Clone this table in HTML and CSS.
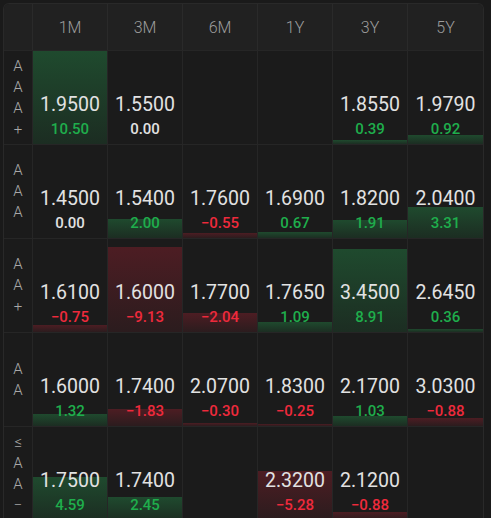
FILE: index.html
```html
<!DOCTYPE html>
<html>
<head>
<meta charset="utf-8">
<link rel="stylesheet" href="styles.css">
</head>
<body>
<div class="table">
  <div class="row head">
    <div class="hcell label"></div>
    <div class="hcell">1M</div>
    <div class="hcell">3M</div>
    <div class="hcell">6M</div>
    <div class="hcell">1Y</div>
    <div class="hcell">3Y</div>
    <div class="hcell">5Y</div>
  </div>

  <div class="row">
    <div class="cell label"><span class="lbl">AAA+</span></div>
    <div class="cell"><div class="bar up" style="height:100%"></div><div class="val">1.9500</div><div class="chg up">10.50</div></div>
    <div class="cell"><div class="val">1.5500</div><div class="chg zero">0.00</div></div>
    <div class="cell"></div>
    <div class="cell"></div>
    <div class="cell"><div class="bar up" style="height:3.9%"></div><div class="val">1.8550</div><div class="chg up">0.39</div></div>
    <div class="cell"><div class="bar up" style="height:9.2%"></div><div class="val">1.9790</div><div class="chg up">0.92</div></div>
  </div>

  <div class="row">
    <div class="cell label"><span class="lbl">AAA</span></div>
    <div class="cell"><div class="val">1.4500</div><div class="chg zero">0.00</div></div>
    <div class="cell"><div class="bar up" style="height:20%"></div><div class="val">1.5400</div><div class="chg up">2.00</div></div>
    <div class="cell"><div class="bar down" style="height:5.5%"></div><div class="val">1.7600</div><div class="chg down">−0.55</div></div>
    <div class="cell"><div class="bar up" style="height:6.7%"></div><div class="val">1.6900</div><div class="chg up">0.67</div></div>
    <div class="cell"><div class="bar up" style="height:19.1%"></div><div class="val">1.8200</div><div class="chg up">1.91</div></div>
    <div class="cell"><div class="bar up" style="height:33.1%"></div><div class="val">2.0400</div><div class="chg up">3.31</div></div>
  </div>

  <div class="row">
    <div class="cell label"><span class="lbl">AA+</span></div>
    <div class="cell"><div class="bar down" style="height:7.5%"></div><div class="val">1.6100</div><div class="chg down">−0.75</div></div>
    <div class="cell"><div class="bar down" style="height:91.3%"></div><div class="val">1.6000</div><div class="chg down">−9.13</div></div>
    <div class="cell"><div class="bar down" style="height:20.4%"></div><div class="val">1.7700</div><div class="chg down">−2.04</div></div>
    <div class="cell"><div class="bar up" style="height:10.9%"></div><div class="val">1.7650</div><div class="chg up">1.09</div></div>
    <div class="cell"><div class="bar up" style="height:89.1%"></div><div class="val">3.4500</div><div class="chg up">8.91</div></div>
    <div class="cell"><div class="bar up" style="height:3.6%"></div><div class="val">2.6450</div><div class="chg up">0.36</div></div>
  </div>

  <div class="row">
    <div class="cell label"><span class="lbl">AA</span></div>
    <div class="cell"><div class="bar up" style="height:13.2%"></div><div class="val">1.6000</div><div class="chg up">1.32</div></div>
    <div class="cell"><div class="bar down" style="height:18.3%"></div><div class="val">1.7400</div><div class="chg down">−1.83</div></div>
    <div class="cell"><div class="bar down" style="height:3%"></div><div class="val">2.0700</div><div class="chg down">−0.30</div></div>
    <div class="cell"><div class="bar down" style="height:2.5%"></div><div class="val">1.8300</div><div class="chg down">−0.25</div></div>
    <div class="cell"><div class="bar up" style="height:10.3%"></div><div class="val">2.1700</div><div class="chg up">1.03</div></div>
    <div class="cell"><div class="bar down" style="height:8.8%"></div><div class="val">3.0300</div><div class="chg down">−0.88</div></div>
  </div>

  <div class="row">
    <div class="cell label"><span class="lbl">≤AA−</span></div>
    <div class="cell"><div class="bar up" style="height:45.9%"></div><div class="val">1.7500</div><div class="chg up">4.59</div></div>
    <div class="cell"><div class="bar up" style="height:24.5%"></div><div class="val">1.7400</div><div class="chg up">2.45</div></div>
    <div class="cell"></div>
    <div class="cell"><div class="bar down" style="height:52.8%"></div><div class="val">2.3200</div><div class="chg down">−5.28</div></div>
    <div class="cell"><div class="bar down" style="height:8.8%"></div><div class="val">2.1200</div><div class="chg down">−0.88</div></div>
    <div class="cell"></div>
  </div>
</div>
</body>
</html>
```

FILE: styles.css
```css
* { box-sizing: border-box; }
html, body {
  margin: 0;
  padding: 0;
  background: #1a1a1a;
  font-family: Roboto, "Liberation Sans", sans-serif;
  overflow: hidden;
}
body { height: 518px; }
.table {
  margin: 3px 0 0 3px;
  width: 481px;
  border: 1px solid #292929;
  border-bottom: none;
  border-radius: 6px 6px 0 0;
  background: #1b1b1b;
  overflow: hidden;
}
.row {
  display: grid;
  grid-template-columns: 29px repeat(6, 1fr);
  height: 94px;
  border-bottom: 1px solid #262626;
}
.row.head {
  height: 47px;
  background: #212121;
}
.hcell {
  display: flex;
  align-items: center;
  justify-content: center;
  color: #9c9c9c;
  font-size: 16px;
  font-weight: 300;
  border-right: 1px solid #2a2a2a;
}
.hcell:last-child, .cell:last-child { border-right: none; }
.cell {
  position: relative;
  display: flex;
  flex-direction: column;
  justify-content: flex-end;
  align-items: center;
  gap: 2px;
  padding-bottom: 5px;
  border-right: 1px solid #262626;
}
.cell.label {
  justify-content: center;
  padding: 0;
}
.lbl {
  display: block;
  width: 10px;
  word-break: break-all;
  text-align: center;
  color: #a8a8a8;
  font-size: 15px;
  font-weight: 300;
  line-height: 21px;
}
.bar {
  position: absolute;
  left: 0;
  right: 0;
  bottom: 0;
}
.bar.up { background: linear-gradient(#1f4a2e, #1c2d22); }
.bar.down { background: linear-gradient(#4d1d23, #2b1c1e); }
.val {
  position: relative;
  color: #e2e2e2;
  font-size: 19.5px;
  line-height: 25px;
  font-weight: 400;
}
.chg {
  position: relative;
  font-size: 15px;
  line-height: 20px;
  font-weight: 500;
}
.chg.up { color: #1fae4c; }
.chg.down { color: #ee2a3c; }
.chg.zero { color: #e2e2e2; }
```
